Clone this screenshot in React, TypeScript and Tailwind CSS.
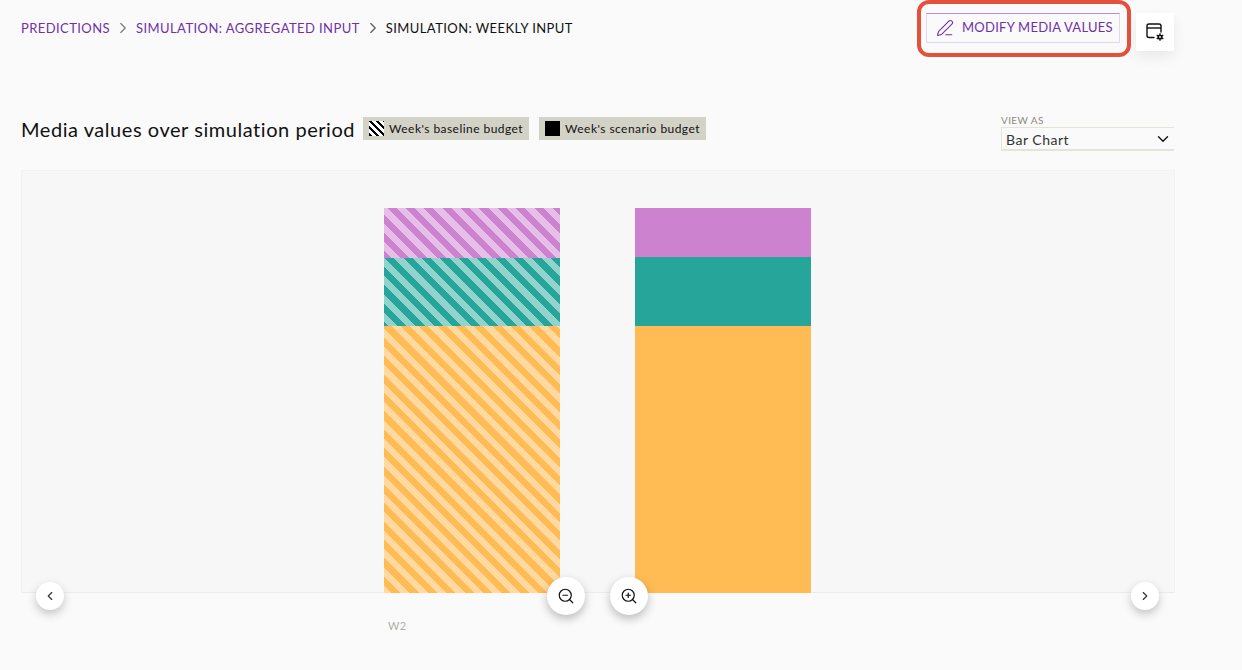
import { ChevronDown, ChevronLeft, ChevronRight, PenLine, ZoomIn, ZoomOut } from 'lucide-react';

const Crumbs = () => (
  <nav className="flex items-center text-[13px] tracking-[0.42px] leading-5 -mt-[2px]">
    <span className="text-[#7030a8]">PREDICTIONS</span>
    <ChevronRight className="w-[18px] h-[18px] mx-[4px] text-[#77776f]" strokeWidth={1.5} />
    <span className="text-[#7030a8]">SIMULATION: AGGREGATED INPUT</span>
    <ChevronRight className="w-[18px] h-[18px] mx-[4px] text-[#55554f]" strokeWidth={1.5} />
    <span className="text-[#111111]">SIMULATION: WEEKLY INPUT</span>
  </nav>
);

const TableSettingsIcon = () => (
  <svg width="20" height="20" viewBox="0 0 20 20" fill="none">
    <path d="M9 15.5H4a2 2 0 0 1-2-2V4a2 2 0 0 1 2-2h10a2 2 0 0 1 2 2v6" stroke="#111" strokeWidth="1.4" strokeLinecap="round" />
    <path d="M2 6h14" stroke="#111" strokeWidth="1.4" />
    <circle cx="15" cy="15" r="2.6" fill="#111" />
    <path d="M15 11.2v7.6M11.7 13.1l6.6 3.8M11.7 16.9l6.6-3.8" stroke="#111" strokeWidth="1.3" />
    <circle cx="15" cy="15" r="0.9" fill="#fff" />
  </svg>
);

const Bars = () => (
  <div className="flex gap-[75px] pl-[362px] pt-[37px] h-[calc(100%+1px)]">
    <div className="w-[176px] flex flex-col">
      <div className="h-[50px] bg-[repeating-linear-gradient(45deg,#cd82d0_0,#cd82d0_5px,#e6bfe8_5px,#e6bfe8_11.5px,#cd82d0_11.5px,#cd82d0_13px)]" />
      <div className="h-[68px] bg-[repeating-linear-gradient(45deg,#26a69a_0,#26a69a_3.1px,#92d3cd_3.1px,#92d3cd_9.6px,#26a69a_9.6px,#26a69a_13px)]" />
      <div className="flex-1 bg-[repeating-linear-gradient(45deg,#ffd9a0_0,#ffd9a0_5.3px,#ffbc55_5.3px,#ffbc55_11.8px,#ffd9a0_11.8px,#ffd9a0_13px)]" />
    </div>
    <div className="w-[176px] flex flex-col">
      <div className="h-[49px] bg-[#cd82d0]" />
      <div className="h-[69px] bg-[#26a69a]" />
      <div className="flex-1 bg-[#ffbc55]" />
    </div>
  </div>
);

const App = () => {
  return (
    <div className="relative w-[1242px] h-[670px] overflow-hidden bg-[#fafafa] font-['Lato',sans-serif] text-[#111111]">
      <section className="w-[1175px] pl-[21px]">
        <header className="flex items-center justify-between h-[56px] pt-[1px]">
          <Crumbs />
          <div className="flex items-start pt-[12px] h-full mr-[1px]">
            <button className="flex items-center gap-[8px] w-[194px] h-[30px] pl-[9px] border border-[#e2d6f0] border-t-[#b98fdc] text-[13px] tracking-[0.26px] text-[#7030a8]">
              <PenLine className="w-[18px] h-[18px]" strokeWidth={1.4} />
              MODIFY MEDIA VALUES
            </button>
            <div className="w-[38px] h-[38px] ml-[16px] bg-white shadow-[0_6px_14px_rgba(0,0,0,0.07)] flex items-center justify-center">
              <TableSettingsIcon />
            </div>
          </div>
        </header>

        <div className="flex items-start justify-between h-[114px] pt-[61px]">
          <div className="flex items-center gap-[8px]">
            <h1 className="text-[20px] leading-[24px] tracking-[0.55px] font-normal">Media values over simulation period</h1>
            <div className="flex items-center gap-[10px] -mt-[1px]">
              <span className="flex items-center gap-[5px] h-[23px] w-[166px] px-[6px] bg-[#d3d2c7] text-[12px] tracking-[0.45px]">
                <span className="w-[15px] h-[15px] bg-[repeating-linear-gradient(45deg,#000_0,#000_2.5px,#fff_2.5px,#fff_5px)]" />
                Week's baseline budget
              </span>
              <span className="flex items-center gap-[5px] h-[23px] w-[167px] px-[6px] bg-[#d3d2c7] text-[12px] tracking-[0.45px]">
                <span className="w-[15px] h-[15px] bg-black" />
                Week's scenario budget
              </span>
            </div>
          </div>
          <div className="w-[173px] mr-[1px] -mt-[3px]">
            <div className="text-[10px] leading-[13px] tracking-[0.4px] text-[#8b8a7d]">VIEW AS</div>
            <div className="flex items-center justify-between h-[24px] pl-[4px] pr-[2px] border-l border-b-2 border-t border-[#e5e4da] text-[14px] tracking-[0.5px] text-[#333333]">
              <span className="mt-[1px]">Bar Chart</span>
              <ChevronDown className="w-[18px] h-[18px] text-[#111111]" strokeWidth={1.8} />
            </div>
          </div>
        </div>

        <div className="h-[423px] bg-[#f7f7f7] border border-[#f2f2f2] border-b-[#ececec] box-border">
          <Bars />
        </div>
        <div className="pl-[367px] pt-[25px] text-[11px] leading-[16px] tracking-[0.3px] text-[#b0afa4]">W2</div>
      </section>

      <button className="absolute left-[36px] top-[582px] w-[28px] h-[28px] rounded-full bg-white shadow-[0_4px_10px_rgba(0,0,0,0.22)] flex items-center justify-center">
        <ChevronLeft className="w-[14px] h-[14px] text-[#333333]" strokeWidth={2} />
      </button>
      <button className="absolute left-[1131px] top-[582px] w-[28px] h-[28px] rounded-full bg-white shadow-[0_4px_10px_rgba(0,0,0,0.22)] flex items-center justify-center">
        <ChevronRight className="w-[14px] h-[14px] text-[#333333]" strokeWidth={2} />
      </button>
      <button className="absolute left-[547px] top-[577px] w-[38px] h-[38px] rounded-full bg-white shadow-[0_4px_10px_rgba(0,0,0,0.25)] flex items-center justify-center">
        <ZoomOut className="w-[18px] h-[18px] text-[#111111]" strokeWidth={1.6} />
      </button>
      <button className="absolute left-[610px] top-[577px] w-[38px] h-[38px] rounded-full bg-white shadow-[0_4px_10px_rgba(0,0,0,0.25)] flex items-center justify-center">
        <ZoomIn className="w-[18px] h-[18px] text-[#111111]" strokeWidth={1.6} />
      </button>

      {/* red annotation round the button */}
      <div className="absolute left-[917px] top-[0px] w-[214px] h-[57px] rounded-[12px] border-[4px] border-[#e5503c]" />
    </div>
  );
};

export default App;
